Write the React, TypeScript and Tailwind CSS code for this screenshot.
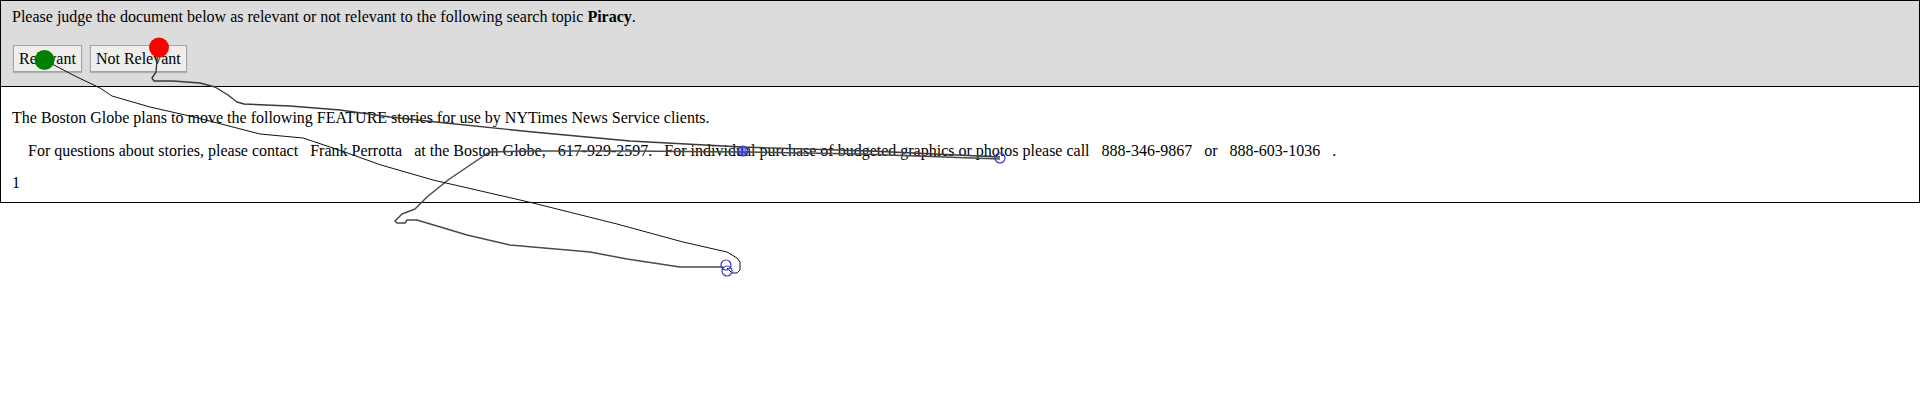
import React from 'react';

// Mouse trace recorded over the judging page
const greenTrace = [
  [44, 60], [52, 64], [75, 76], [100, 88], [112, 96], [150, 107], [194, 117],
  [260, 134], [303, 138], [339, 150], [381, 165], [433, 180], [533, 203],
  [617, 224], [683, 242], [727, 252], [737, 258], [740, 262], [740, 270],
  [737, 273], [732, 273], [727, 268],
];

const redTrace = [
  [159, 48], [157, 60], [156, 72], [152, 78], [154, 81], [173, 81], [200, 83],
  [215, 87], [228, 95], [237, 102], [244, 104], [290, 106], [340, 110],
  [390, 117], [436, 122], [533, 132], [630, 141], [742, 147], [870, 151],
  [1000, 157],
];

const loopTrace = [
  [723, 267], [680, 267], [627, 259], [590, 252], [510, 245], [467, 235],
  [417, 220], [407, 220], [405, 223], [397, 223], [395, 221], [402, 214],
  [415, 209], [427, 197], [448, 180], [485, 155], [490, 152], [533, 151],
  [630, 151], [743, 152], [860, 154], [1000, 159],
];

const toPath = (pts: number[][]) =>
  pts.map(([x, y], i) => `${i === 0 ? 'M' : 'L'}${x} ${y}`).join(' ');

const JudgeButton = ({ label }: { label: string }) => (
  <button
    type="button"
    className="h-[27px] px-[5px] flex items-center bg-[#efeeea] border border-[#a3a3a3] shadow-[0_1px_1px_rgba(0,0,0,0.2)] text-[16px] leading-[18px] text-black"
  >
    {label}
  </button>
);

const App = () => {
  return (
    <div className="relative w-[1920px] h-[400px] bg-white text-black font-['Liberation_Sans'] overflow-hidden">
      <div className="font-['Liberation_Serif',serif] text-[16px] leading-[18px]">
        {/* Question panel */}
        <div className="bg-[#dcdcdc] border border-black pl-[11px] pt-[7px] pb-[14px]">
          <p>
            Please judge the document below as relevant or not relevant to the following search topic{' '}
            <b>Piracy</b>.
          </p>
          <div className="flex gap-[8px] mt-[19px] ml-[1px]">
            <JudgeButton label="Relevant" />
            <JudgeButton label="Not Relevant" />
          </div>
        </div>

        {/* Document */}
        <div className="border border-t-0 border-black pl-[11px] pt-[22px] pb-[10px] flex flex-col gap-[14.5px] whitespace-pre">
          <p>The Boston Globe plans to move the following FEATURE stories for use by NYTimes News Service clients.</p>
          <p>{'    For questions about stories, please contact   Frank Perrotta   at the Boston Globe,   617-929-2597.   For individual purchase of budgeted graphics or photos please call   888-346-9867   or   888-603-1036   .'}</p>
          <p>1</p>
        </div>
      </div>

      {/* Cursor trace overlay */}
      <svg className="absolute top-0 left-0 pointer-events-none" width="1920" height="400" viewBox="0 0 1920 400">
        <path d={toPath(loopTrace)} fill="none" stroke="#4a4a4a" strokeWidth="1.5" strokeLinejoin="round" />
        <path d={toPath(redTrace)} fill="none" stroke="#3a3a3a" strokeWidth="1.4" strokeLinejoin="round" />
        <path d={toPath(greenTrace)} fill="none" stroke="#111" strokeWidth="1" strokeLinejoin="round" />
        <circle cx="743" cy="151" r="5" fill="rgba(60,60,220,0.55)" stroke="#3434d6" strokeWidth="1.2" />
        <circle cx="1000" cy="158" r="5" fill="none" stroke="#3434d6" strokeWidth="1.2" />
        <circle cx="726" cy="265" r="5" fill="none" stroke="#3434d6" strokeWidth="1.2" />
        <circle cx="727" cy="271" r="5" fill="none" stroke="#3434d6" strokeWidth="1.2" />
        <circle cx="44.5" cy="60" r="10" fill="#008000" />
        <circle cx="159" cy="47.5" r="10" fill="#ff0000" />
      </svg>
    </div>
  );
};

export default App;
